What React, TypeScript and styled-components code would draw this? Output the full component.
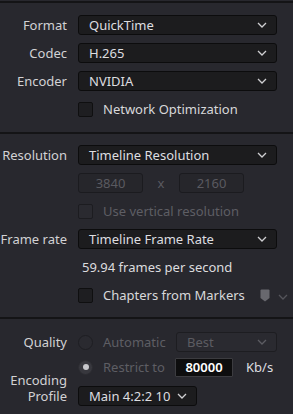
import React from 'react';
import styled, { createGlobalStyle } from 'styled-components';

const GlobalStyle = createGlobalStyle`
	html, body {
		margin: 0;
		padding: 0;
		background: #28282e;
	}
	body {
		font-family: 'Noto Sans', 'Open Sans', sans-serif;
		font-size: 13px;
	}
`;

const Panel = styled.div`
	width: 293px;
	height: 414px;
	overflow: hidden;
	background: #28282e;
	color: #d4d4d6;
	border-top: 2px solid #141416;
	margin-top: 1px;
	box-sizing: border-box;
`;

const Section = styled.section<{ $pt: number; $pb: number; $gap?: number }>`
	display: flex;
	flex-direction: column;
	gap: ${(p) => p.$gap ?? 8}px;
	padding: ${(p) => p.$pt}px 0 ${(p) => p.$pb}px 0;
	border-bottom: 2px solid #141416;
	&:last-child {
		border-bottom: none;
	}
`;

const Row = styled.div<{ $align?: string; $mt?: number }>`
	display: grid;
	grid-template-columns: 67px 1fr;
	column-gap: 11px;
	align-items: ${(p) => p.$align ?? 'center'};
	min-height: 20px;
	margin-top: ${(p) => p.$mt ?? 0}px;
`;

const Label = styled.div<{ $lines?: boolean }>`
	text-align: right;
	color: #d2d2d4;
	white-space: ${(p) => (p.$lines ? 'normal' : 'nowrap')};
	line-height: 16px;
`;

const Controls = styled.div`
	display: flex;
	align-items: center;
	min-width: 0;
`;

const Select = styled.div<{ $width?: number; $disabled?: boolean }>`
	display: flex;
	align-items: center;
	justify-content: space-between;
	box-sizing: border-box;
	width: ${(p) => (p.$width ? `${p.$width}px` : '199px')};
	height: 20px;
	padding: 0 9px 0 10px;
	border-radius: 3px;
	background: ${(p) => (p.$disabled ? '#2a2a30' : '#1c1c1e')};
	border: 1px solid ${(p) => (p.$disabled ? '#1d1d21' : '#0c0c0d')};
	color: ${(p) => (p.$disabled ? '#5c5c62' : '#dedee0')};
	white-space: nowrap;
	svg {
		flex: none;
	}
`;

const NumBox = styled.div<{ $active?: boolean }>`
	box-sizing: border-box;
	width: ${(p) => (p.$active ? '58px' : '65px')};
	height: ${(p) => (p.$active ? '19px' : '20px')};
	display: flex;
	align-items: center;
	justify-content: center;
	border-radius: ${(p) => (p.$active ? '1px' : '3px')};
	background: ${(p) => (p.$active ? '#0d0d0e' : '#26262b')};
	border: 1px solid ${(p) => (p.$active ? '#3c3c40' : '#1b1b1f')};
	color: ${(p) => (p.$active ? '#ffffff' : '#5a5a60')};
	font-weight: ${(p) => (p.$active ? 600 : 400)};
`;

const Times = styled.span`
	width: 36px;
	text-align: center;
	color: #5a5a60;
`;

const Check = styled.span<{ $disabled?: boolean }>`
	flex: none;
	box-sizing: border-box;
	width: 15px;
	height: 15px;
	border-radius: 2px;
	background: ${(p) => (p.$disabled ? '#2a2a30' : '#1e1e21')};
	border: 1px solid ${(p) => (p.$disabled ? '#1c1c20' : '#0f0f10')};
`;

const Radio = styled.span<{ $checked?: boolean }>`
	flex: none;
	box-sizing: border-box;
	width: 15px;
	height: 15px;
	border-radius: 50%;
	display: flex;
	align-items: center;
	justify-content: center;
	background: ${(p) => (p.$checked ? '#38383e' : '#2a2a30')};
	border: 1px solid ${(p) => (p.$checked ? '#2c2c31' : '#1e1e22')};
	&::after {
		content: '';
		display: ${(p) => (p.$checked ? 'block' : 'none')};
		width: 6px;
		height: 6px;
		border-radius: 50%;
		background: #c8c8cc;
	}
`;

const OptText = styled.span<{ $disabled?: boolean; $w?: number }>`
	margin-left: 10px;
	color: ${(p) => (p.$disabled ? '#5e5e64' : '#d8d8da')};
	white-space: nowrap;
	width: ${(p) => (p.$w ? `${p.$w}px` : 'auto')};
`;

const Info = styled.div`
	padding-left: 4px;
	color: #dcdcde;
	white-space: nowrap;
`;

const Unit = styled.span`
	margin-left: 13px;
	color: #dedee0;
`;

const Shield = styled.svg`
	margin-left: 15px;
`;

const Chevron = ({ color = '#cfcfd2' }: { color?: string }) => (
	<svg width='10' height='6' viewBox='0 0 10 6'>
		<polyline points='1,1 5,5 9,1' fill='none' stroke={color} strokeWidth='1.3' />
	</svg>
);

const Dropdown = ({ value, width, disabled }: { value: string; width?: number; disabled?: boolean }) => (
	<Select $width={width} $disabled={disabled}>
		<span>{value}</span>
		<Chevron color={disabled ? '#5c5c62' : '#cfcfd2'} />
	</Select>
);

const App = () => {
	return (
		<>
			<GlobalStyle />
			<Panel>
				<Section $pt={12} $pb={13}>
					<Row>
						<Label>Format</Label>
						<Controls>
							<Dropdown value='QuickTime' />
						</Controls>
					</Row>
					<Row>
						<Label>Codec</Label>
						<Controls>
							<Dropdown value='H.265' />
						</Controls>
					</Row>
					<Row>
						<Label>Encoder</Label>
						<Controls>
							<Dropdown value='NVIDIA' />
						</Controls>
					</Row>
					<Row>
						<span />
						<Controls>
							<Check />
							<OptText>Network Optimization</OptText>
						</Controls>
					</Row>
				</Section>
				<Section $pt={11} $pb={12}>
					<Row>
						<Label>Resolution</Label>
						<Controls>
							<Dropdown value='Timeline Resolution' />
						</Controls>
					</Row>
					<Row>
						<span />
						<Controls>
							<NumBox>3840</NumBox>
							<Times>x</Times>
							<NumBox>2160</NumBox>
						</Controls>
					</Row>
					<Row>
						<span />
						<Controls>
							<Check $disabled />
							<OptText $disabled>Use vertical resolution</OptText>
						</Controls>
					</Row>
					<Row>
						<Label>Frame rate</Label>
						<Controls>
							<Dropdown value='Timeline Frame Rate' />
						</Controls>
					</Row>
					<Row>
						<span />
						<Info>59.94 frames per second</Info>
					</Row>
					<Row>
						<span />
						<Controls>
							<Check />
							<OptText>Chapters from Markers</OptText>
							<Shield width='10' height='13' viewBox='0 0 10 13'>
								<path d='M0.5 1.5 Q0.5 0.5 1.5 0.5 H8.5 Q9.5 0.5 9.5 1.5 V9 L5 12.5 L0.5 9 Z' fill='#68686e' />
							</Shield>
							<span style={{ marginLeft: 8 }}>
								<Chevron color='#55555b' />
							</span>
						</Controls>
					</Row>
				</Section>
				<Section $pt={13} $pb={8} $gap={5}>
					<Row>
						<Label>Quality</Label>
						<Controls>
							<Radio />
							<OptText $disabled $w={62}>
								Automatic
							</OptText>
							<span style={{ marginLeft: 11 }}>
								<Dropdown value='Best' width={101} disabled />
							</span>
						</Controls>
					</Row>
					<Row>
						<span />
						<Controls>
							<Radio $checked />
							<OptText $disabled $w={62}>
								Restrict to
							</OptText>
							<span style={{ marginLeft: 10 }}>
								<NumBox $active>80000</NumBox>
							</span>
							<Unit>Kb/s</Unit>
						</Controls>
					</Row>
					<Row $align='end' $mt={-10}>
						<Label $lines>
							Encoding
							<br />
							Profile
						</Label>
						<Controls style={{ marginBottom: -2 }}>
							<Dropdown value='Main 4:2:2 10' width={119} />
						</Controls>
					</Row>
				</Section>
			</Panel>
		</>
	);
};

export default App;
